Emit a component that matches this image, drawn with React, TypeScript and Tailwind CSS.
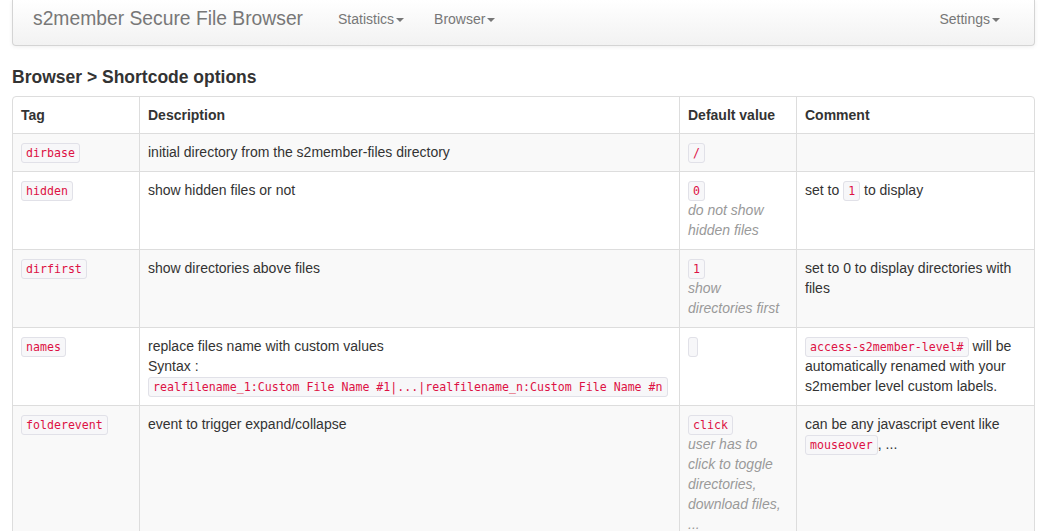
import React from 'react'

const FONT = { fontFamily: '"Liberation Sans", Arial, sans-serif' }

function Code({ children }: { children?: React.ReactNode }) {
  return (
    <code className="rounded-[3px] border border-[#e1e1e8] bg-[#f7f7f9] px-[4px] py-[2px] font-['DejaVu_Sans_Mono',monospace] text-[11.6px] leading-none text-[#dd1144]">
      {children}
    </code>
  )
}

function Caret() {
  return <span className="ml-[2px] inline-block border-x-[4px] border-t-[4px] border-x-transparent border-t-[#777] align-middle" />
}

function Note({ children }: { children: React.ReactNode }) {
  return <em className="text-[#999]">{children}</em>
}

const ROWS = [
  {
    tag: 'dirbase',
    desc: <>initial directory from the s2member-files directory</>,
    def: <Code>/</Code>,
    comment: null,
  },
  {
    tag: 'hidden',
    desc: <>show hidden files or not</>,
    def: (
      <>
        <Code>0</Code>
        <br />
        <Note>do not show hidden files</Note>
      </>
    ),
    comment: (
      <>
        set to <Code>1</Code> to display
      </>
    ),
  },
  {
    tag: 'dirfirst',
    desc: <>show directories above files</>,
    def: (
      <>
        <Code>1</Code>
        <br />
        <Note>show directories first</Note>
      </>
    ),
    comment: <>set to 0 to display directories with files</>,
  },
  {
    tag: 'names',
    desc: (
      <>
        replace files name with custom values
        <br />
        Syntax :
        <br />
        <span className="whitespace-nowrap">
          <Code>realfilename_1:Custom File Name #1|...|realfilename_n:Custom File Name #n</Code>
        </span>
      </>
    ),
    def: <Code />,
    comment: (
      <>
        <Code>access-s2member-level#</Code> will be automatically renamed with your s2member level custom labels.
      </>
    ),
  },
  {
    tag: 'folderevent',
    desc: <>event to trigger expand/collapse</>,
    def: (
      <>
        <Code>click</Code>
        <br />
        <Note>user has to click to toggle directories, download files, ...</Note>
      </>
    ),
    comment: (
      <>
        can be any javascript event like <Code>mouseover</Code>, ...
      </>
    ),
  },
]

export default function App() {
  return (
    <div className="min-h-screen bg-white pl-[12px] pr-[14px] text-[14px] leading-[20px] text-[#333]" style={FONT}>
      {/* Navbar */}
      <div className="flex h-[46px] items-start rounded-b-[4px] border-x border-b border-[#d4d4d4] bg-gradient-to-b from-white to-[#f2f2f2] pt-[9px] shadow-[0_1px_4px_rgba(0,0,0,0.065)]">
        <span className="pl-[20px] pr-[20px] text-[19.3px] leading-[20px] text-[#777]">s2member Secure File Browser</span>
        <span className="px-[15px] text-[#777]">
          Statistics<Caret />
        </span>
        <span className="px-[15px] text-[#777]">
          Browser<Caret />
        </span>
        <span className="ml-auto pr-[34px] text-[#777]">
          Settings<Caret />
        </span>
      </div>

      <h4 className="mb-[9px] mt-[21px] text-[17.5px] font-bold leading-[20px] text-[#333]">Browser &gt; Shortcode options</h4>

      <table className="w-full table-fixed border-separate border-spacing-0 rounded-[4px] border border-[#ddd]">
        <colgroup>
          <col className="w-[126px]" />
          <col className="w-[540px]" />
          <col className="w-[117px]" />
          <col />
        </colgroup>
        <thead>
          <tr>
            <th className="p-[8px] text-left align-bottom font-bold">Tag</th>
            <th className="border-l border-[#ddd] p-[8px] text-left align-bottom font-bold">Description</th>
            <th className="border-l border-[#ddd] p-[8px] text-left align-bottom font-bold">Default value</th>
            <th className="border-l border-[#ddd] p-[8px] text-left align-bottom font-bold">Comment</th>
          </tr>
        </thead>
        <tbody>
          {ROWS.map((r, i) => (
            <tr key={r.tag} className={i % 2 === 0 ? 'bg-[#f9f9f9]' : 'bg-white'}>
              <td className="border-t border-[#ddd] px-[8px] pb-[9px] pt-[8px] align-top">
                <Code>{r.tag}</Code>
              </td>
              <td className="border-l border-t border-[#ddd] px-[8px] pb-[9px] pt-[8px] align-top">{r.desc}</td>
              <td className="border-l border-t border-[#ddd] px-[8px] pb-[9px] pt-[8px] align-top">{r.def}</td>
              <td className="border-l border-t border-[#ddd] px-[8px] pb-[9px] pt-[8px] align-top">{r.comment}</td>
            </tr>
          ))}
        </tbody>
      </table>
    </div>
  )
}
